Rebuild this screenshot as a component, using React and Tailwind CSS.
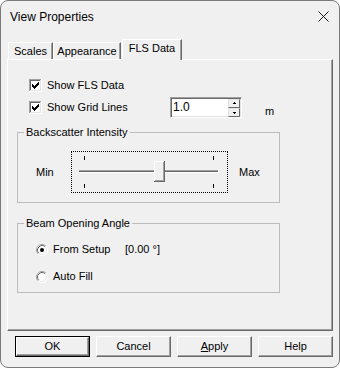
import React from "react";

function CheckBox() {
  const px = [
    [6, 0], [5, 1], [6, 1], [0, 2], [4, 2], [5, 2], [6, 2],
    [0, 3], [1, 3], [3, 3], [4, 3], [5, 3], [0, 4], [1, 4], [2, 4], [3, 4], [4, 4],
    [1, 5], [2, 5], [3, 5], [2, 6],
  ];
  return (
    <svg width="13" height="13" viewBox="0 0 13 13" shapeRendering="crispEdges" className="shrink-0">
      <rect x="0" y="0" width="13" height="13" fill="#fff" />
      <path d="M0 0.5H12M0.5 0V12" stroke="#a0a0a0" />
      <path d="M1 1.5H11M1.5 1V11" stroke="#696969" />
      <path d="M0 12.5H13M12.5 0V13" stroke="#fff" />
      <path d="M1 11.5H12M11.5 1V12" stroke="#e3e3e3" />
      {px.map(([x, y], i) => (
        <rect key={i} x={3 + x} y={3 + y} width="1" height="1" fill="#000" />
      ))}
    </svg>
  );
}

function Radio({ on }) {
  return (
    <svg width="12" height="12" viewBox="0 0 12 12" className="shrink-0">
      <circle cx="6" cy="6" r="5.5" fill="#fff" />
      <path d="M2.11 9.89 A5.5 5.5 0 0 1 9.89 2.11" stroke="#a0a0a0" fill="none" />
      <path d="M9.89 2.11 A5.5 5.5 0 0 1 2.11 9.89" stroke="#ffffff" fill="none" />
      <path d="M2.82 9.18 A4.5 4.5 0 0 1 9.18 2.82" stroke="#696969" fill="none" />
      <path d="M9.18 2.82 A4.5 4.5 0 0 1 2.82 9.18" stroke="#e3e3e3" fill="none" />
      {on && <circle cx="6" cy="6" r="2" fill="#000" />}
    </svg>
  );
}

function SpinBtn({ up }) {
  return (
    <div className="w-[12px] h-[9px] bg-[#f0f0f0] border-t border-l border-[#e3e3e3] border-r border-b border-r-[#696969] border-b-[#696969] flex items-center justify-center">
      <svg width="5" height="3" viewBox="0 0 5 3" shapeRendering="crispEdges">
        {up ? (
          <>
            <rect x="2" y="0" width="1" height="1" fill="#000" />
            <rect x="1" y="1" width="3" height="1" fill="#000" />
          </>
        ) : (
          <>
            <rect x="1" y="1" width="3" height="1" fill="#000" />
            <rect x="2" y="2" width="1" height="1" fill="#000" />
          </>
        )}
      </svg>
    </div>
  );
}

function Slider() {
  return (
    <svg width="155" height="40" viewBox="0 0 155 40" shapeRendering="crispEdges">
      <rect x="12" y="4" width="1" height="4" fill="#000" />
      <rect x="141" y="4" width="1" height="4" fill="#000" />
      <rect x="12" y="32" width="1" height="4" fill="#000" />
      <rect x="141" y="32" width="1" height="4" fill="#000" />
      <rect x="7" y="18" width="139" height="1" fill="#a0a0a0" />
      <rect x="7" y="19" width="139" height="1" fill="#696969" />
      <rect x="7" y="20" width="140" height="1" fill="#ffffff" />
      <rect x="146" y="18" width="1" height="3" fill="#ffffff" />
      <rect x="82" y="9" width="11" height="21" fill="#f0f0f0" />
      <rect x="82" y="9" width="10" height="1" fill="#ffffff" />
      <rect x="82" y="9" width="1" height="20" fill="#ffffff" />
      <rect x="92" y="9" width="1" height="21" fill="#696969" />
      <rect x="82" y="29" width="11" height="1" fill="#696969" />
      <rect x="91" y="10" width="1" height="19" fill="#a0a0a0" />
      <rect x="83" y="28" width="9" height="1" fill="#a0a0a0" />
    </svg>
  );
}

function Btn({ children, def }) {
  return (
    <div className={def ? "w-[75px] h-[21px] border border-[#000]" : "w-[75px] h-[21px]"}>
      <div className="w-full h-full flex items-center justify-center bg-[#f0f0f0] border-t border-l border-white border-r border-b border-r-[#696969] border-b-[#696969] shadow-[inset_-1px_-1px_0_#a0a0a0] leading-none">
        {children}
      </div>
    </div>
  );
}

export default function App() {
  return (
    <div className="w-[340px] h-[368px] bg-[#f0f0f0] border border-[#7a7a7a] rounded-[8px] overflow-hidden flex flex-col font-['Liberation_Sans',Arial,sans-serif] text-[11px] text-black">
      <div className="h-[31px] shrink-0 flex items-center justify-between pl-[9px] pr-[10px]">
        <span className="text-[12px] leading-none">View Properties</span>
        <svg width="11" height="11" viewBox="0 0 11 11">
          <path d="M0.5 0.5 L10.5 10.5 M10.5 0.5 L0.5 10.5" stroke="#1a1a1a" strokeWidth="1" />
        </svg>
      </div>

      <div className="mt-[7px] h-[20px] shrink-0 flex items-end pl-[7px]">
        <div className="w-[45px] h-[17px] flex items-center justify-center border-l border-t border-white border-r border-r-[#696969] shadow-[inset_-1px_0_0_#a0a0a0] leading-none">
          Scales
        </div>
        <div className="w-[68px] h-[17px] flex items-center justify-center border-l border-t border-white border-r border-r-[#696969] shadow-[inset_-1px_0_0_#a0a0a0] leading-none">
          Appearance
        </div>
        <div className="ml-[1px] w-[60px] h-[21px] -mb-px relative z-10 bg-[#f0f0f0] flex items-start pt-[3px] justify-center border-l border-t border-white border-r border-r-[#696969] shadow-[inset_-1px_0_0_#a0a0a0] leading-none">
          FLS Data
        </div>
      </div>

      <div className="ml-[6px] w-[326px] h-[272px] shrink-0 flex flex-col border-l border-t border-white border-r border-b border-r-[#696969] border-b-[#696969] shadow-[inset_-1px_-1px_0_#a0a0a0]">
        <div className="mt-[19px] h-[13px] flex items-center pl-[21px]">
          <CheckBox />
          <span className="ml-[5px] leading-none">Show FLS Data</span>
        </div>
        <div className="mt-[5px] h-[21px] flex items-center pl-[21px]">
          <div className="w-[141px] flex items-center">
            <CheckBox />
            <span className="ml-[5px] leading-none">Show Grid Lines</span>
          </div>
          <div className="w-[72px] h-[21px] flex bg-white border-t border-l border-[#a0a0a0] border-r border-b border-r-white border-b-white shadow-[inset_1px_1px_0_#696969,inset_-1px_-1px_0_#e3e3e3]">
            <span className="flex-1 pl-[2px] pt-[2px] text-[12px] leading-[15px]">1.0</span>
            <div className="flex flex-col pt-[1px] mr-[1px]">
              <SpinBtn up />
              <SpinBtn />
            </div>
          </div>
          <span className="ml-[23px] mt-[8px] leading-none">m</span>
        </div>

        <fieldset className="ml-[9px] mt-[8px] w-[263px] border border-[#bcbcbc]">
          <legend className="ml-[6px] px-[2px] leading-[13px]">Backscatter Intensity</legend>
          <div className="pl-[18px] pb-[9px] pt-[12px] flex items-center">
            <span className="w-[35px] leading-none">Min</span>
            <div className="w-[157px] h-[42px] border border-dotted border-black">
              <Slider />
            </div>
            <span className="ml-[11px] leading-none">Max</span>
          </div>
        </fieldset>

        <fieldset className="ml-[9px] mt-[14px] w-[263px] border border-[#bcbcbc]">
          <legend className="ml-[6px] px-[2px] leading-[13px]">Beam Opening Angle</legend>
          <div className="pl-[18px] pb-[9px] pt-[13px] flex flex-col">
            <div className="h-[13px] flex items-center">
              <Radio on />
              <span className="ml-[5px] w-[72px] leading-none">From Setup</span>
              <span className="leading-none">[0.00 °]</span>
            </div>
            <div className="mt-[14px] h-[13px] flex items-center">
              <Radio />
              <span className="ml-[5px] leading-none">Auto Fill</span>
            </div>
          </div>
        </fieldset>
      </div>

      <div className="mt-[5px] pl-[14px] flex gap-[6px]">
        <Btn def>OK</Btn>
        <Btn>Cancel</Btn>
        <Btn>
          <span>
            <span className="underline underline-offset-1">A</span>pply
          </span>
        </Btn>
        <Btn>Help</Btn>
      </div>
    </div>
  );
}
